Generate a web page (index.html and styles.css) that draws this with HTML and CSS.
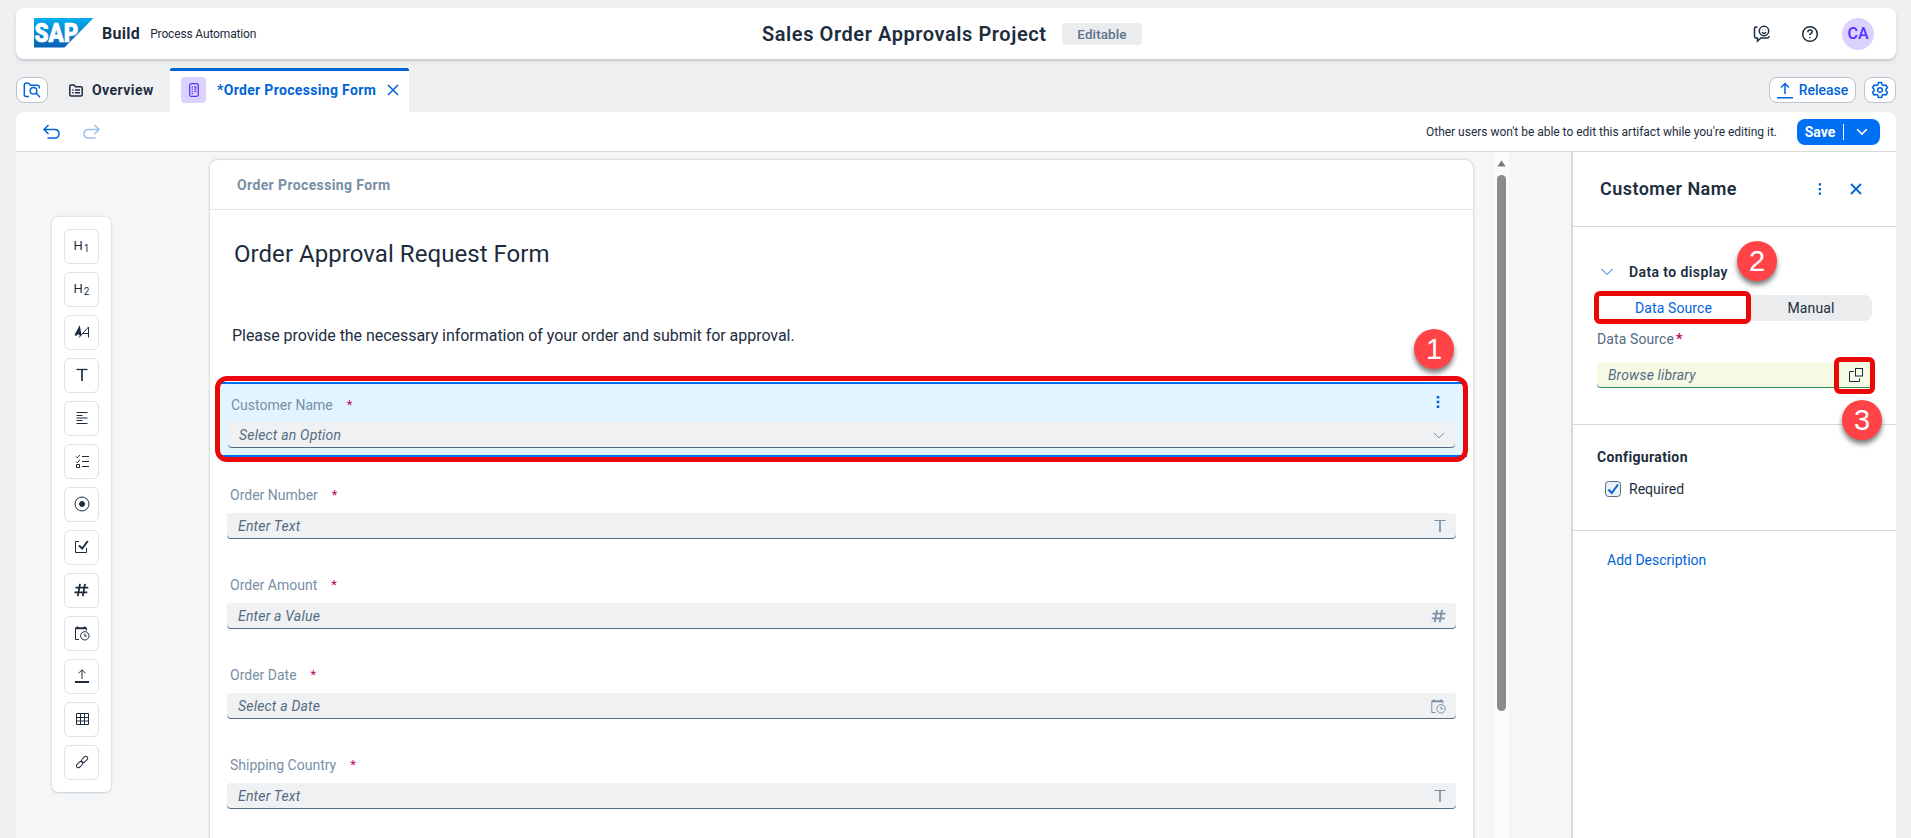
FILE: index.html
```
<!DOCTYPE html>
<html lang="en">
<head>
<meta charset="utf-8">
<title>Sales Order Approvals Project</title>
<link rel="stylesheet" href="styles.css">
</head>
<body>
<div class="app">
  <header class="shell">
    <svg class="logo" width="60" height="30" viewBox="0 0 60 30">
      <defs><linearGradient id="sap" x1="0" y1="0" x2="0" y2="1"><stop offset="0" stop-color="#00aeef"/><stop offset="1" stop-color="#0a5fb4"/></linearGradient></defs>
      <path d="M0 0H59.500L30.500 29.500H0Z" fill="url(#sap)"/>
      <text class="logo-text" x="0.500" y="24" textLength="44" lengthAdjust="spacingAndGlyphs">SAP</text>
    </svg>
    <span class="brand">Build</span>
    <span class="product">Process Automation</span>
    <div class="shell-title">
      <h1 class="project">Sales Order Approvals Project</h1>
      <span class="badge">Editable</span>
    </div>
    <div class="shell-actions">
      <svg width="18" height="18" viewBox="0 0 18 18" class="ink">
        <path d="M4.500 2H3Q1.500 2 1.500 3.500V11.500Q1.500 13 3 13H4.500V16L8 13H14.500Q16 13 16.300 11.200"/>
        <circle cx="11" cy="6" r="4.700"/><path d="M8.900 7.300Q11 9.600 13.100 7.300"/><path d="M9.500 4.700v.6M12.500 4.700v.6"/>
      </svg>
      <svg width="18" height="18" viewBox="0 0 18 18" class="ink">
        <circle cx="9" cy="9" r="7.300"/><path d="M6.800 7.200Q6.800 5 9 5T11.200 7Q11.200 8.200 9 9.200V10.300"/><path d="M9 11.900v1.400"/>
      </svg>
      <span class="avatar">CA</span>
    </div>
  </header>

  <nav class="tabs">
    <button class="btn btn-search">
      <svg width="18" height="16" viewBox="0 0 18 16" class="blue"><path d="M6 14.500H3Q1.300 14.500 1.300 12.800V3Q1.300 1.300 3 1.300H5.500L7.500 3.300H14.500Q16.200 3.300 16.200 5V6.500"/><circle cx="10.500" cy="8.700" r="3.300"/><path d="M13 11L17 15.200"/></svg>
    </button>
    <div class="tab">
      <svg width="14" height="13" viewBox="0 0 14 13" class="ink"><path d="M.8 2.300Q.8 .9 2.200 .9H5L6.500 2.700H11.800Q13.200 2.700 13.200 4.100V10.400Q13.200 11.900 11.800 11.900H2.200Q.8 11.900 .8 10.400Z"/><path d="M3.200 6h1.300M6 6h5M3.200 8.700h1.300M6 8.700h5"/></svg>
      <span class="tab-plain">Overview</span>
    </div>
    <div class="tab tab-active">
      <span class="tile"><svg width="10" height="14" viewBox="0 0 10 14" class="violet"><rect x=".7" y=".7" width="8.600" height="12.600" rx="1.500"/><path d="M2.700 4h1.200M5.200 4h2.300M2.700 6.200h1.200M5.200 6.200h2.300M2.700 8.300h1.200M5.200 8.300h2.300M2.700 10.500h1.200"/></svg></span>
      <span class="tab-name">*Order Processing Form</span>
      <svg width="12" height="12" viewBox="0 0 12 12" class="blue"><path d="M1 1L11 11M11 1L1 11"/></svg>
    </div>
    <div class="tab-actions">
      <button class="btn btn-release">
        <svg width="16" height="17" viewBox="0 0 16 17" class="blue"><path d="M8 12V1.500M4 5.500L8 1.500L12 5.500M0 15.700H16"/></svg>
        <span>Release</span>
      </button>
      <button class="btn btn-gear">
        <svg width="18" height="18" viewBox="0 0 18 18" class="blue"><path d="M7.400 1.500H10.600L11.200 3.800L12.600 4.600L14.900 4L16.500 6.700L14.900 8.300V9.700L16.500 11.300L14.900 14L12.600 13.400L11.200 14.200L10.600 16.500H7.400L6.800 14.200L5.400 13.400L3.100 14L1.500 11.300L3.100 9.700V8.300L1.500 6.700L3.100 4L5.400 4.600L6.800 3.800Z" stroke-linejoin="round"/><circle cx="9" cy="9" r="2.300"/></svg>
      </button>
    </div>
  </nav>

  <div class="toolbar">
    <svg width="17" height="16" viewBox="0 0 17 16" class="blue"><path d="M5.500 1L1 5.500L5.500 10M1 5.500H11.500Q16 5.500 16 9.800T11.500 14H4.500"/></svg>
    <svg width="17" height="16" viewBox="0 0 17 16" class="blue faded"><path d="M11.500 1L16 5.500L11.500 10M16 5.500H5.500Q1 5.500 1 9.800T5.500 14H12.500"/></svg>
    <span class="lock-note">Other users won't be able to edit this artifact while you're editing it.</span>
    <button class="save"><span>Save</span><i class="save-sep"></i><svg width="12" height="8" viewBox="0 0 12 8"><path d="M1.200 1.200L6 6L10.800 1.200"/></svg></button>
  </div>

  <main class="work">
    <section class="canvas">
      <aside class="palette">
        <button class="tool"><span class="hn">H<sub>1</sub></span></button>
        <button class="tool"><span class="hn">H<sub>2</sub></span></button>
        <button class="tool"><svg width="16" height="12" viewBox="0 0 16 12" class="thin"><path class="heavy" d="M1.500 9.500L5.200 2.500L6.600 9.500M3 7.300H6.300"/><path d="M5 11.500L14.500 1V11.500M9 7.500H14.500"/></svg></button>
        <button class="tool"><svg width="14" height="14" viewBox="0 0 14 14" class="thin"><path d="M1.500 1.500H12.500" stroke-width="1.300"/><path d="M7 1.500V13" stroke-width="1.700"/></svg></button>
        <button class="tool"><svg width="14" height="14" viewBox="0 0 14 14" class="thin"><path d="M1.500 1.500h11M1.500 4.500h6M1.500 7h11M1.500 9.500h6M1.500 12.500h11"/></svg></button>
        <button class="tool"><svg width="14" height="14" viewBox="0 0 14 14" class="thin"><path d="M1 2.500L2.300 3.800L4.800 1M1 7.500L2.300 8.800L4.800 6M1.500 10.500h3v3h-3zM7 2.500h7M7 7.500h7M7 12.500h7"/></svg></button>
        <button class="tool"><svg width="16" height="16" viewBox="0 0 16 16" class="thin"><circle cx="8" cy="8" r="7"/><circle cx="8" cy="8" r="2.500" class="solid"/></svg></button>
        <button class="tool"><svg width="16" height="14" viewBox="0 0 16 14" class="thin"><path d="M5 1.500H1.500V12.500H12.500V8"/><path d="M5 5.500L8.200 8.500L13.800 1" stroke-width="1.900"/></svg></button>
        <button class="tool"><svg width="15" height="14" viewBox="0 0 15 14" class="hash"><path d="M1.500 4.700H14.300M.5 9.300H13.300M6 .8L3.800 13.200M11 .8L8.800 13.200"/></svg></button>
        <button class="tool"><svg width="16" height="15" viewBox="0 0 16 15" class="thin"><path d="M5 13.500H1.500V2H12.500V4.500"/><path d="M1.500 2.300H12.500M3.500 .5V2M10.500 .5V2" stroke-width="1.800"/><circle cx="10.800" cy="9.800" r="4.200"/><path d="M10.800 7.500V10H13"/></svg></button>
        <button class="tool"><svg width="14" height="14" viewBox="0 0 14 14" class="thin"><path d="M7 10V.8M3.500 4.300L7 .8L10.500 4.300"/><path d="M0 13H14" stroke-width="2"/></svg></button>
        <button class="tool"><svg width="14" height="14" viewBox="0 0 14 14" class="thin"><path d="M1.500 1.500h12v11h-12zM1.500 5.500h12M1.500 9h12M5.500 1.500v11M9.500 1.500v11"/></svg></button>
        <button class="tool"><svg width="14" height="14" viewBox="0 0 14 14" class="thin"><rect x="-3.600" y="-1.900" width="7.200" height="3.800" rx="1.900" transform="translate(9.600 4.400) rotate(-45)"/><rect x="-3.600" y="-1.900" width="7.200" height="3.800" rx="1.900" transform="translate(4.600 9.600) rotate(-45)"/></svg></button>
      </aside>

      <article class="form">
        <header class="form-name">Order Processing Form</header>
        <h2 class="form-title">Order Approval Request Form</h2>
        <p class="form-text">Please provide the necessary information of your order and submit for approval.</p>
        <div class="question selected">
          <div class="q-label">Customer Name<b>*</b><svg class="q-menu" width="4" height="12" viewBox="0 0 4 12"><path d="M.7 0h2.600v2.600H.7zM.7 4.700h2.600v2.600H.7zM.7 9.400h2.600v2.600H.7z"/></svg></div>
          <div class="q-input">Select an Option<svg width="12" height="7" viewBox="0 0 12 7" class="slate"><path d="M.8 1L6 5.800L11.200 1"/></svg></div>
          <span class="mark"></span>
          <span class="pin pin-1">1</span>
        </div>
        <div class="question">
          <div class="q-label">Order Number<b>*</b></div>
          <div class="q-input">Enter Text<svg width="12" height="14" viewBox="0 0 12 14" class="slate"><path d="M.5 1.500H11.500"/><path d="M6 1.500V13" stroke-width="1.700"/></svg></div>
        </div>
        <div class="question">
          <div class="q-label">Order Amount<b>*</b></div>
          <div class="q-input">Enter a Value<svg width="15" height="14" viewBox="0 0 15 14" class="hash slate-hash"><path d="M1.500 4.700H14.500M.8 9.300H13.800M6 .8L3.800 13.200M11 .8L8.800 13.200"/></svg></div>
        </div>
        <div class="question">
          <div class="q-label">Order Date<b>*</b></div>
          <div class="q-input">Select a Date<svg width="15" height="15" viewBox="0 0 15 15" class="slate"><path d="M4.500 13.500H.8V2H12V4.500"/><path d="M.8 2.300H12M3 .5V2M10 .5V2" stroke-width="1.800"/><circle cx="10.100" cy="9.800" r="4.200"/><path d="M10 7.500V10H12.200"/></svg></div>
        </div>
        <div class="question">
          <div class="q-label">Shipping Country<b>*</b></div>
          <div class="q-input">Enter Text<svg width="12" height="14" viewBox="0 0 12 14" class="slate"><path d="M.5 1.500H11.500"/><path d="M6 1.500V13" stroke-width="1.700"/></svg></div>
        </div>
      </article>

      <div class="scroll">
        <svg width="9" height="7" viewBox="0 0 9 7"><path d="M4.500 .5L8.700 6.500H.3Z" fill="#7c7c7c"/></svg>
        <div class="thumb"></div>
      </div>
    </section>

    <aside class="panel">
      <header class="panel-head">
        <h3 class="panel-title">Customer Name</h3>
        <svg width="4" height="12" viewBox="0 0 4 12" class="panel-menu"><path d="M.7 .2h2.300v2.300H.7zM.7 4.900h2.300v2.300H.7zM.7 9.500h2.300v2.300H.7z"/></svg>
        <svg width="12" height="12" viewBox="0 0 12 12" class="blue bold-x"><path d="M1 1L11 11M11 1L1 11"/></svg>
      </header>
      <section class="data">
        <div class="data-head">
          <svg width="12" height="8" viewBox="0 0 12 8" class="blue slim"><path d="M.5 1L6 6.500L11.500 1"/></svg>
          <span>Data to display</span>
          <span class="pin pin-2">2</span>
        </div>
        <div class="segment">
          <span class="seg-on">Data Source<i class="mark mark-seg"></i></span>
          <span class="seg-off">Manual</span>
        </div>
        <div class="src-label">Data Source<b>*</b></div>
        <div class="src-input">Browse library
          <svg width="15" height="15" viewBox="0 0 15 15" class="thin"><rect x="6.500" y=".5" width="7" height="7.500"/><path d="M4.800 3.500H.5V13.500H10.500V10.500"/></svg>
          <i class="mark mark-browse"></i>
          <span class="pin pin-3">3</span>
        </div>
      </section>
      <section class="config">
        <h4 class="config-title">Configuration</h4>
        <label class="check"><svg width="16" height="16" viewBox="0 0 16 16"><rect x=".5" y=".5" width="15" height="15" rx="3" fill="#edf1f5" stroke="#556b82"/><path d="M3.500 8.500L6.800 12L13 3.500" fill="none" stroke="#0064d9" stroke-width="2"/></svg>Required</label>
      </section>
      <a class="add">Add Description</a>
    </aside>
  </main>
</div>
</body>
</html>
```
FILE: styles.css
```
* { box-sizing: border-box; }
body {
  margin: 0;
  background: #eff0f2;
  color: #1d2d3e;
  font: 14px/18px Roboto, "Noto Sans", sans-serif;
}
h1, h2, h3, h4, p { margin: 0; }
button { font: inherit; padding: 0; margin: 0; }
svg { display: block; flex: none; overflow: visible; }
i { font-style: normal; }

.app { width: 1911px; height: 838px; padding: 8px 15px 0 16px; overflow: hidden; display: flex; flex-direction: column; }

.ink, .blue, .violet, .thin, .slate, .hash { fill: none; }
.ink { stroke: #1d2d3e; stroke-width: 1.5; }
.blue { stroke: #0064d9; stroke-width: 1.5; }
.violet { stroke: #5d36ff; stroke-width: 1.3; }
.thin { stroke: #1d2d3e; stroke-width: 1; }
.slate { stroke: #7b91a8; stroke-width: 1; }
.hash { stroke: #1d2d3e; stroke-width: 1.8; }
.slate-hash { stroke: #7b91a8; }
.solid { fill: #1d2d3e; }
.heavy { stroke-width: 2.2; }
.faded { opacity: .4; }
.slim { stroke-width: 1; }
.bold-x { stroke-width: 1.8; }

.shell {
  position: relative; flex: none;
  height: 51px; padding: 0 22px 0 18px;
  display: flex; align-items: center;
  background: #fff; border-radius: 8px;
  box-shadow: 0 2px 1px #d0d4d7, 0 2px 4px rgba(34, 53, 72, .15);
}
.logo { margin-top: -2px; }
.logo-text { font: 900 26px Roboto, sans-serif; fill: #fff; stroke: #fff; stroke-width: .7; }
.brand { margin-left: 8px; font-size: 16px; font-weight: 700; letter-spacing: .3px; }
.product { margin-left: 10px; font-size: 12px; letter-spacing: -.15px; }
.shell-title { position: absolute; left: 746px; display: flex; align-items: center; gap: 15px; }
.project { width: 285px; white-space: nowrap; font-size: 20px; line-height: 24px; font-weight: 600; letter-spacing: .57px; }
.badge { width: 80px; height: 22px; line-height: 22px; border-radius: 4px; background: #eaecee; color: #5b738b; text-align: center; font-weight: 500; font-size: 13.500px; letter-spacing: .1px; }
.shell-actions { margin-left: auto; display: flex; align-items: center; gap: 30px; }
.avatar { width: 32px; height: 32px; margin-left: -7px; border-radius: 50%; background: #dcd2ff; color: #552cff; text-align: center; font-size: 16px; line-height: 32px; font-weight: 500; }

.tabs { flex: none; height: 44px; margin-top: 9px; display: flex; align-items: center; }
.btn { height: 26px; display: flex; align-items: center; justify-content: center; background: #fff; border: 1px solid #bcc3ca; border-radius: 8px; color: #0064d9; }
.btn-search { width: 32px; }
.tab { display: flex; align-items: center; height: 44px; padding-left: 21px; gap: 9px; font-weight: 700; }
.tab-plain { width: 62px; letter-spacing: .45px; }
.tab-active { width: 239px; margin-left: 16px; padding: 0 10px 3px 11px; gap: 11px; background: #fff; border-top: 3px solid #0064d9; border-radius: 2px 2px 0 0; color: #0064d9; }
.tab-name { width: 159px; white-space: nowrap; letter-spacing: .33px; }
.tile { width: 26px; height: 26px; display: grid; place-items: center; border-radius: 4px; background: #dcd2ff; }
.tab-actions { margin-left: auto; display: flex; gap: 8px; }
.btn-release { width: 87px; gap: 6px; font-weight: 500; }
.btn-gear { width: 32px; }

.toolbar { flex: none; height: 40px; padding: 0 16px 0 27px; display: flex; align-items: center; gap: 23px; background: #fff; border-bottom: 1px solid #d9d9d9; border-radius: 8px 8px 0 0; }
.lock-note { margin-left: auto; margin-right: -3px; font-size: 12px; letter-spacing: -.02px; }
.save { width: 83px; height: 26px; padding-right: 4px; display: flex; align-items: center; justify-content: center; gap: 8px; border: 0; border-radius: 8px; background: #0070f2; color: #fff; font-weight: 700; }
.save-sep { width: 1px; height: 16px; background: #fff; margin-right: 4px; }
.save svg { fill: none; stroke: #fff; stroke-width: 1.6; }

.work { flex: 1; display: flex; min-height: 0; }
.canvas { width: 1555px; display: flex; align-items: flex-start; background: #f5f6f7; }
.palette { flex: none; width: 59px; margin: 65px 0 0 36px; padding: 12px; display: flex; flex-direction: column; gap: 8px; background: #fff; border-radius: 6px; box-shadow: 0 0 3px rgba(34, 53, 72, .2), 0 1px 2px rgba(34, 53, 72, .1); }
.tool { width: 35px; height: 35px; padding-bottom: 1px; display: grid; place-items: center; background: #fff; border: 1px solid #dfe1e5; border-radius: 6px; color: #1d2d3e; }
.hn { font-size: 13px; line-height: 14px; }
.hn sub { font-size: 10px; line-height: 0; vertical-align: -2px; margin-left: 1px; }

.form { flex: none; width: 1263px; height: 700px; margin: 8px 0 0 99px; background: #fff; border-radius: 8px; box-shadow: 0 0 3px rgba(34, 53, 72, .3); }
.form-name { height: 50px; padding: 0 27px; border-bottom: 1px solid #e5e7e9; line-height: 51px; color: #788fa6; font-weight: 700; letter-spacing: .38px; }
.form-title { margin: 28px 0 0 24px; font-size: 24px; line-height: 32px; font-weight: 400; letter-spacing: .05px; }
.form-text { margin: 57px 0 37px 22px; font-size: 16px; line-height: 18px; letter-spacing: -.04px; }

.question { position: relative; height: 90px; padding: 11px 17px 0 17px; }
.q-label { display: flex; align-items: center; height: 20px; margin-left: 3px; color: #788fa6; }
.q-label b { margin-left: 14px; color: #ba066c; font-weight: 400; font-size: 13px; }
.q-input { display: flex; justify-content: space-between; align-items: center; height: 26px; margin-top: 8px; padding: 0 10px 0 11px; background: #eff1f2; border-radius: 4px; box-shadow: inset 0 -1px #556b82; color: #556b82; font-style: italic; letter-spacing: .2px; }
.selected { height: 75px; margin: 0 6px 17px 10px; padding: 13px 12px 0 8px; background: #e1f4ff; box-shadow: inset 0 2px #0070f2, inset 0 -2px #0070f2; }
.selected .q-input { margin-top: 7px; }
.q-menu { margin: -7px 15px 0 auto; fill: #0064d9; }

.mark { position: absolute; inset: -6px -1px -5px -5px; border: 5px solid #eb0808; border-radius: 12px; }
.pin { position: absolute; width: 40px; height: 40px; border-radius: 50%; background: #ff4346; color: #fff; font: 29px/40px "Liberation Sans", Arial, sans-serif; letter-spacing: 0; text-align: center; box-shadow: 0 4px 5px rgba(0, 0, 0, .5); z-index: 2; }
.pin-1 { right: 13px; top: -53px; }

.scroll { width: 15px; height: 686px; margin-left: 21px; display: flex; flex-direction: column; align-items: center; padding-top: 8px; background: #fcfcfc; }
.thumb { width: 9px; height: 536px; margin-top: 8px; border-radius: 5px; background: #8b8b8b; }

.panel { flex: 1; background: #fff; border-left: 2px solid #d9d9d9; }
.panel-head { height: 75px; padding: 0 34px 0 27px; display: flex; align-items: center; border-bottom: 1px solid #d9d9d9; }
.panel-title { font-size: 18px; line-height: 24px; font-weight: 600; letter-spacing: .45px; }
.panel-menu { margin-left: auto; margin-right: 28px; fill: #0064d9; }
.data { height: 198px; padding: 35px 24px 0 24px; border-bottom: 1px solid #d9d9d9; }
.data-head { position: relative; height: 20px; margin-left: 4px; display: flex; align-items: center; gap: 16px; font-weight: 600; letter-spacing: .4px; }
.pin-2 { left: 136px; top: -21px; }
.segment { height: 26px; margin-top: 13px; display: flex; background: #eaecee; border-radius: 8px; line-height: 26px; text-align: center; }
.seg-on { position: relative; width: 153px; background: #fff; color: #0064d9; letter-spacing: .1px; }
.seg-off { flex: 1; letter-spacing: .15px; }
.mark-seg { inset: -4px -1px -3px -3px; border-radius: 6px; }
.src-label { margin-top: 9px; color: #556b82; letter-spacing: .1px; }
.src-label b { margin-left: 2px; color: #ba066c; font-weight: 700; }
.src-input { position: relative; height: 26px; margin-top: 14px; padding: 0 8px 0 11px; display: flex; align-items: center; justify-content: space-between; background: #f5fae5; border-radius: 4px; box-shadow: inset 0 -1px #30914c; color: #556b82; font-style: italic; letter-spacing: .15px; }
.mark-browse { inset: -5px -3px -6px auto; width: 41px; border-radius: 6px; }
.pin-3 { right: -10px; top: 38px; font-style: normal; }
.config { height: 106px; padding: 23px 24px 0; border-bottom: 1px solid #d9d9d9; }
.config-title { font-size: 14px; line-height: 18px; font-weight: 700; letter-spacing: .37px; }
.check { display: flex; align-items: center; gap: 8px; margin: 14px 0 0 8px; }
.add { display: block; margin: 20px 0 0 34px; color: #0064d9; }
```
